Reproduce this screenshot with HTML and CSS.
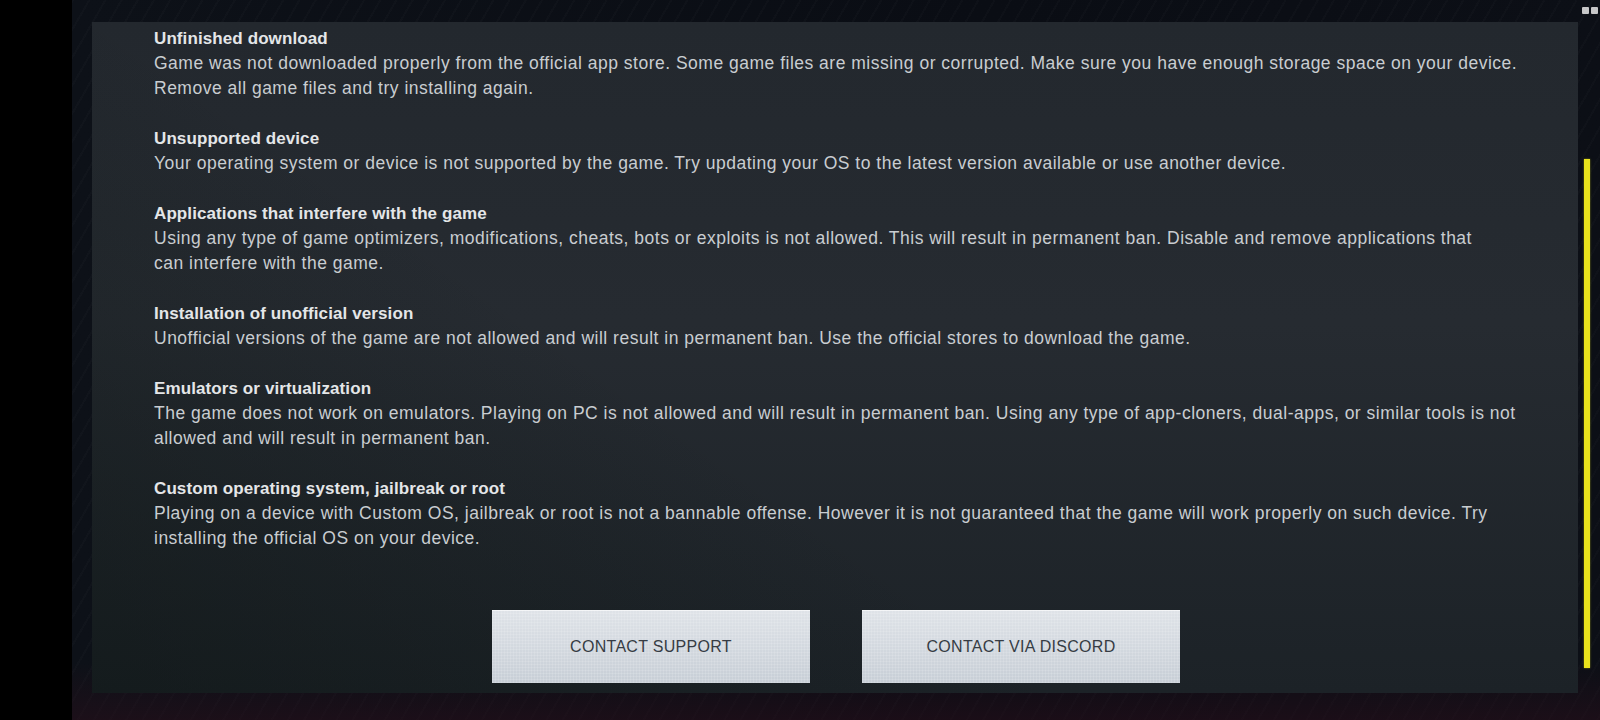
FILE: index.html
```html
<!DOCTYPE html>
<html lang="en">
<head>
<meta charset="utf-8">
<title>Troubleshooting</title>
<link rel="stylesheet" href="styles.css">
</head>
<body>
<div class="screen">
  <div class="side"></div>
  <div class="stage">
    <div class="status">
      <svg width="16" height="9" viewBox="0 0 16 9"><rect x="0" y="1" width="7" height="7" rx="1" fill="#e8e8e8"/><rect x="9" y="1" width="7" height="7" rx="1" fill="#e8e8e8"/></svg>
    </div>
    <div class="panel">
      <div class="content">
        <section class="item">
          <h3>Unfinished download</h3>
          <p>Game was not downloaded properly from the official app store. Some game files are missing or corrupted. Make sure you have enough storage space on your device.<br>Remove all game files and try installing again.</p>
        </section>
        <section class="item">
          <h3>Unsupported device</h3>
          <p>Your operating system or device is not supported by the game. Try updating your OS to the latest version available or use another device.</p>
        </section>
        <section class="item">
          <h3>Applications that interfere with the game</h3>
          <p>Using any type of game optimizers, modifications, cheats, bots or exploits is not allowed. This will result in permanent ban. Disable and remove applications that<br>can interfere with the game.</p>
        </section>
        <section class="item">
          <h3>Installation of unofficial version</h3>
          <p>Unofficial versions of the game are not allowed and will result in permanent ban. Use the official stores to download the game.</p>
        </section>
        <section class="item">
          <h3>Emulators or virtualization</h3>
          <p>The game does not work on emulators. Playing on PC is not allowed and will result in permanent ban. Using any type of app-cloners, dual-apps, or similar tools is not<br>allowed and will result in permanent ban.</p>
        </section>
        <section class="item">
          <h3>Custom operating system, jailbreak or root</h3>
          <p>Playing on a device with Custom OS, jailbreak or root is not a bannable offense. However it is not guaranteed that the game will work properly on such device. Try<br>installing the official OS on your device.</p>
        </section>
      </div>
      <div class="actions">
        <button class="btn">CONTACT SUPPORT</button>
        <button class="btn">CONTACT VIA DISCORD</button>
      </div>
    </div>
    <div class="track"><div class="thumb"></div></div>
  </div>
</div>
</body>
</html>
```

FILE: styles.css
```css
* { box-sizing: border-box; }
html, body { margin: 0; padding: 0; }
body {
  width: 1600px;
  height: 720px;
  overflow: hidden;
  background: #000;
  font-family: "Liberation Sans", Arial, sans-serif;
}
.screen {
  display: flex;
  width: 1600px;
  height: 720px;
}
.side {
  width: 72px;
  flex: none;
  background: #000;
}
.stage {
  position: relative;
  flex: 1;
  display: flex;
  align-items: flex-start;
  gap: 6px;
  padding: 22px 0 0 20px;
  background:
    linear-gradient(to bottom, rgba(0,0,0,0) 0%, rgba(0,0,0,0) 92%, rgba(40,14,26,0.55) 100%),
    repeating-linear-gradient(120deg, rgba(255,255,255,0.015) 0 2px, rgba(0,0,0,0) 2px 14px),
    linear-gradient(to right, #0d1118, #0a0d14 60%, #0c0f16);
}
.status {
  position: absolute;
  top: 1px;
  right: 2px;
  opacity: 0.85;
}
.panel {
  width: 1486px;
  height: 671px;
  flex: none;
  display: flex;
  flex-direction: column;
  padding: 4px 20px 0 62px;
  background:
    linear-gradient(35deg, rgba(10,18,16,0.45) 0%, rgba(10,18,16,0.2) 22%, rgba(0,0,0,0) 40%),
    linear-gradient(to bottom, #23282e 0%, #262b31 45%, #1c2227 100%);
}
.content {
  display: flex;
  flex-direction: column;
  gap: 25px;
}
.item h3 {
  margin: 0;
  font-size: 17px;
  line-height: 25px;
  font-weight: 700;
  color: #e4e6e8;
  letter-spacing: 0.1px;
}
.item p {
  margin: 0;
  font-size: 17.5px;
  line-height: 25px;
  color: #c9cdd1;
  white-space: nowrap;
  letter-spacing: 0.5px;
}
.actions {
  margin: 59px -22px 0 -62px;
  display: flex;
  justify-content: center;
  gap: 52px;
}
.btn {
  width: 318px;
  height: 73px;
  border: none;
  padding: 0;
  font-family: "Liberation Sans", Arial, sans-serif;
  font-size: 16px;
  letter-spacing: 0.3px;
  color: #363c44;
  background:
    repeating-linear-gradient(0deg, rgba(255,255,255,0.12) 0 1px, rgba(0,0,0,0) 1px 3px),
    repeating-linear-gradient(90deg, rgba(255,255,255,0.12) 0 1px, rgba(0,0,0,0) 1px 3px),
    linear-gradient(to bottom, #dfe3e8, #c7ced6);
  box-shadow: inset 0 1px 0 rgba(255,255,255,0.6);
}
.track {
  width: 6px;
  height: 671px;
  flex: none;
  padding-top: 137px;
}
.thumb {
  width: 6px;
  height: 509px;
  background: #e8e21c;
  box-shadow: 0 0 2px rgba(232,226,28,0.6);
}
```
